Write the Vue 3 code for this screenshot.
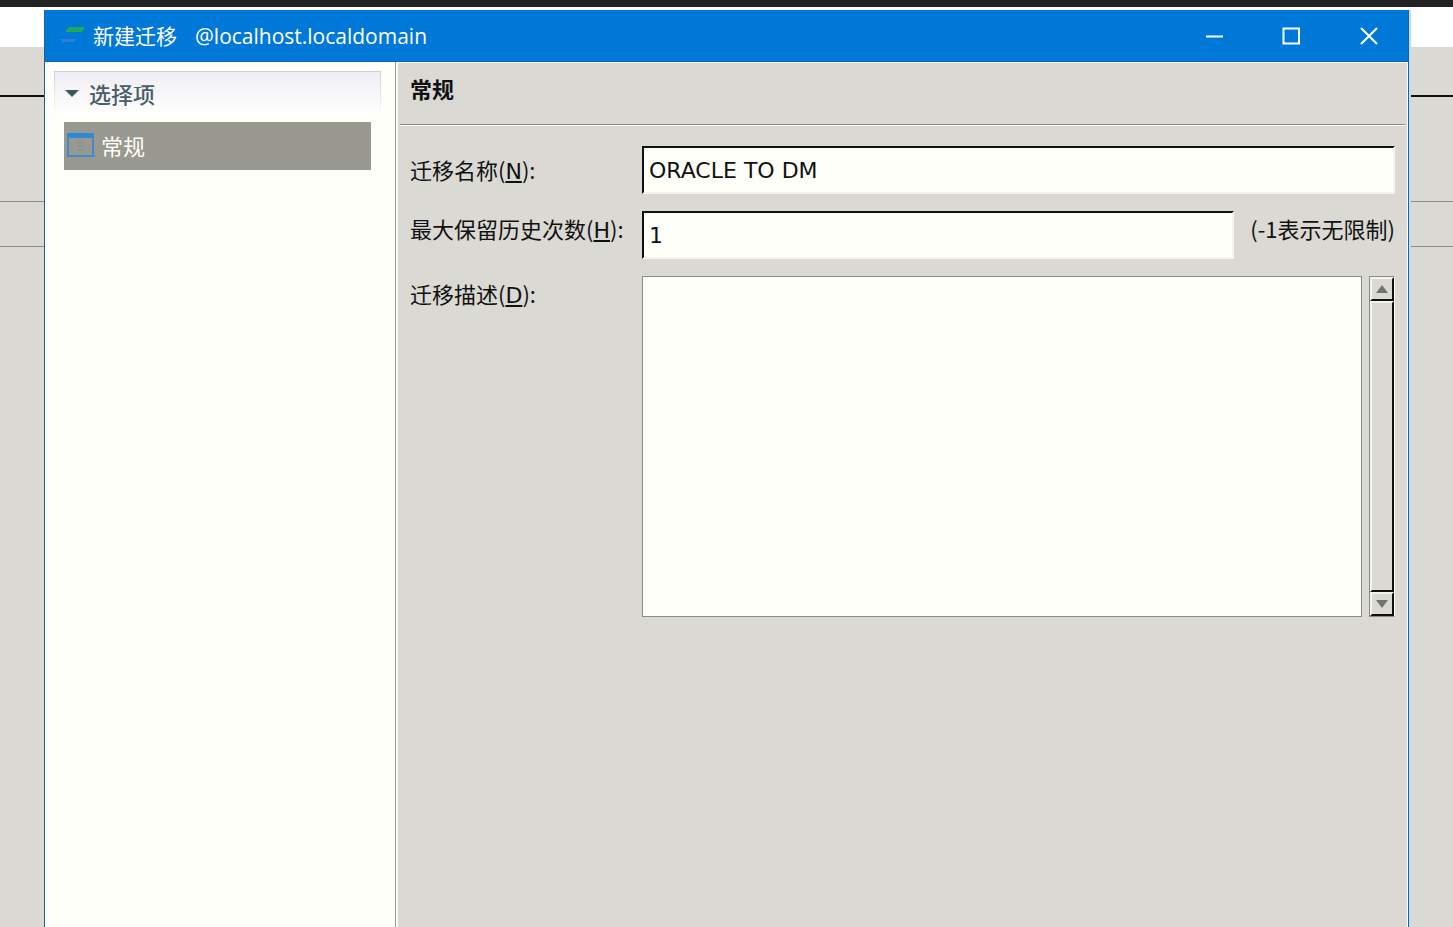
<script setup>
import { ref } from "vue";

const options = [{ id: "general", label: "常规" }];
const selected = ref("general");
const expanded = ref(true);

const name = ref("ORACLE TO DM");
const history = ref("1");
const description = ref("");
const area = ref(null);

function scrollArea(step) {
  area.value.scrollTop += step;
}
</script>

<template>
  <div class="desktop">
    <!-- window behind the dialog -->
    <div class="backdrop" aria-hidden="true">
      <div class="strip dark"></div>
      <div class="strip menu"></div>
      <div class="strip tools"></div>
      <div class="strip tabs"></div>
      <div class="strip columns"></div>
      <div class="strip rest"></div>
    </div>

    <div class="dialog" role="dialog" aria-labelledby="dialog-title">
      <header class="titlebar">
        <svg class="app-icon" width="30" height="24" viewBox="0 0 30 24">
          <path d="M10 5 L13 3 H28 L25 8 H8 Z" fill="#20a75c" />
          <path d="M4 15 H20 L17 18 H5 Z" fill="#2b7fd8" />
        </svg>
        <h1 id="dialog-title" class="title">
          <span>新建迁移</span>
          <span class="host">@localhost.localdomain</span>
        </h1>
        <div class="window-buttons">
          <button type="button" aria-label="最小化">
            <svg width="20" height="20" viewBox="0 0 20 20"><path d="M1 10.5H18" /></svg>
          </button>
          <button type="button" aria-label="最大化">
            <svg width="20" height="20" viewBox="0 0 20 20"><path d="M1.5 2.5H17V17.5H1.5Z" /></svg>
          </button>
          <button type="button" aria-label="关闭">
            <svg width="20" height="20" viewBox="0 0 20 20"><path d="M2 2L18 18M18 2L2 18" /></svg>
          </button>
        </div>
      </header>

      <div class="body">
        <nav class="sidebar">
          <button type="button" class="group" :aria-expanded="expanded" @click="expanded = !expanded">
            <svg width="14" height="8" viewBox="0 0 14 8"><path d="M0 0H14L7 7Z" fill="#40565f" /></svg>
            <span>选择项</span>
          </button>
          <ul v-if="expanded" class="items">
            <li v-for="option in options" :key="option.id">
              <button
                type="button"
                class="item"
                :class="{ active: option.id === selected }"
                @click="selected = option.id"
              >
                <svg width="30" height="28" viewBox="0 0 30 28">
                  <path d="M1 1H28V6H1Z" fill="#2f8ad6" />
                  <path d="M2 5V24H27V5" fill="none" stroke="#3f8cc8" stroke-width="2" />
                  <path d="M11 10H18M11 14H18M11 18H18" stroke="#7f929d" stroke-width="1" />
                  <path d="M28 24H30" stroke="#5d96c0" stroke-width="2" />
                </svg>
                <span>{{ option.label }}</span>
              </button>
            </li>
          </ul>
        </nav>

        <main class="panel">
          <h2 class="panel-title">常规</h2>
          <form class="form" @submit.prevent>
            <label class="tall" for="name">迁移名称(<u>N</u>):</label>
            <input id="name" v-model="name" type="text" accesskey="n" />

            <label for="history">最大保留历史次数(<u>H</u>):</label>
            <div class="history">
              <input id="history" v-model="history" type="text" accesskey="h" />
              <span class="note">(-1表示无限制)</span>
            </div>

            <label for="description">迁移描述(<u>D</u>):</label>
            <div class="description">
              <textarea id="description" ref="area" v-model="description" accesskey="d"></textarea>
              <div class="scrollbar">
                <button type="button" aria-label="向上滚动" @click="scrollArea(-30)">
                  <svg width="12" height="8" viewBox="0 0 12 8"><path d="M0 8L6 0L12 8Z" /></svg>
                </button>
                <div class="thumb"></div>
                <button type="button" aria-label="向下滚动" @click="scrollArea(30)">
                  <svg width="12" height="8" viewBox="0 0 12 8"><path d="M0 0H12L6 8Z" /></svg>
                </button>
              </div>
            </div>
          </form>
        </main>
      </div>
    </div>
  </div>
</template>

<style>
body {
  margin: 0;
  background: #dad9d4;
}
</style>

<style scoped>
* {
  box-sizing: border-box;
}

.desktop {
  position: relative;
  display: flex;
  min-height: 100vh;
  padding: 10px 44px 0;
  font-family: "Noto Sans CJK SC", sans-serif;
  font-size: 22px;
  color: #111;
}

button {
  padding: 0;
  border: 0;
  background: none;
  font: inherit;
  color: inherit;
}

/* Backdrop */
.backdrop {
  position: absolute;
  inset: 0;
  display: flex;
  flex-direction: column;
}

.strip {
  background: #dad9d4;
}

.dark {
  height: 7px;
  background: #222;
}

.menu {
  height: 40px;
  background: #fff;
}

.tools {
  height: 50px;
  border-bottom: 2px solid #111;
}

.tabs {
  height: 105px;
  border-bottom: 1px solid #8b8b88;
}

.columns {
  height: 45px;
  border-bottom: 1px solid #8b8b88;
}

.rest {
  flex: 1;
}

/* Dialog */
.dialog {
  position: relative;
  flex: 1;
  display: flex;
  flex-direction: column;
  min-width: 0;
  border: 1px solid #1c639c;
  border-width: 0 1px;
  box-shadow: 2px 0 0 #bfdcf6;
}

.titlebar {
  display: flex;
  align-items: center;
  height: 52px;
  padding: 0 17px 0 12px;
  border-bottom: 1px solid #0b66b5;
  background: #0078d7;
  color: #fff;
}

.title {
  flex: 1;
  display: flex;
  align-items: baseline;
  gap: 18px;
  margin: 0 0 0 6px;
  font-size: 21px;
  font-weight: 400;
  line-height: 32px;
  white-space: nowrap;
}

.host {
  font-family: "Open Sans", sans-serif;
}

.window-buttons {
  display: flex;
  gap: 33px;
}

.window-buttons button {
  display: flex;
  justify-content: center;
  width: 44px;
}

.window-buttons svg {
  fill: none;
  stroke: #fff;
  stroke-width: 2;
}

.body {
  flex: 1;
  display: flex;
}

.sidebar {
  width: 351px;
  padding: 9px 14px 0 9px;
  border-right: 1px solid #9d9d98;
  background: #fffffa;
}

.group {
  display: flex;
  align-items: center;
  gap: 10px;
  width: 100%;
  height: 44px;
  padding-left: 10px;
  border: 1px solid #cfcdda;
  border-bottom: 0;
  border-image: linear-gradient(#cfcdda, #fffffa) 1;
  background: linear-gradient(#efedf4, #fffffd);
  color: #4a5f69;
  font-weight: 500;
  line-height: 32px;
}

.group span,
.item span {
  padding-bottom: 2px;
}

.items {
  margin: 7px 0 0;
  padding: 0 10px;
  list-style: none;
}

.item {
  display: flex;
  align-items: center;
  gap: 5px;
  width: 100%;
  height: 48px;
  padding-left: 2px;
  line-height: 32px;
}

.item.active {
  background: #999891;
  color: #fffffa;
}

.panel {
  flex: 1;
  min-width: 0;
  padding-left: 2px;
  border: 2px solid #fffffa;
  border-width: 1px 1px 0 2px;
  background: #dad9d4;
}

.panel-title {
  height: 62px;
  margin: 0 2px 0 0;
  padding-left: 10px;
  border-bottom: 1px solid #8b8b88;
  box-shadow: 0 1px 0 #fffffa;
  font-size: 22px;
  font-weight: 700;
  line-height: 50px;
}

.form {
  display: grid;
  grid-template-columns: 214px minmax(0, 1fr);
  gap: 17px 18px;
  align-items: start;
  padding: 21px 12px 0 10px;
}

label,
.note {
  line-height: 34px;
  white-space: nowrap;
}

.tall {
  line-height: 46px;
}

u {
  font-family: "DejaVu Sans", sans-serif;
  line-height: 1;
}

input {
  width: 100%;
  min-width: 0;
  height: 48px;
  padding: 1px 5px 0;
  border: 2px solid;
  border-color: #111 #f4f4ee #f4f4ee #111;
  outline: 0;
  background: #fffffa;
  color: #111;
  font: 22px "DejaVu Sans", sans-serif;
}

.history {
  display: flex;
  gap: 16px;
}

.description {
  display: flex;
  gap: 7px;
}

textarea {
  flex: 1;
  min-width: 0;
  height: 341px;
  padding: 4px;
  border: 1px solid #8b8b88;
  outline: 0;
  resize: none;
  scrollbar-width: none;
  background: #fffffa;
  font: 22px "DejaVu Sans", "Noto Sans CJK SC", sans-serif;
}

.scrollbar {
  display: flex;
  flex-direction: column;
  width: 26px;
  border: 1px solid #8b8b88;
  border-right-color: #fffffa;
}

.scrollbar button,
.thumb {
  border: 2px solid;
  border-color: #f4f4ee #111 #111 #f4f4ee;
}

.scrollbar button {
  display: flex;
  align-items: center;
  justify-content: center;
  height: 24px;
}

.scrollbar svg {
  fill: #74746f;
}

.thumb {
  flex: 1;
}
</style>
